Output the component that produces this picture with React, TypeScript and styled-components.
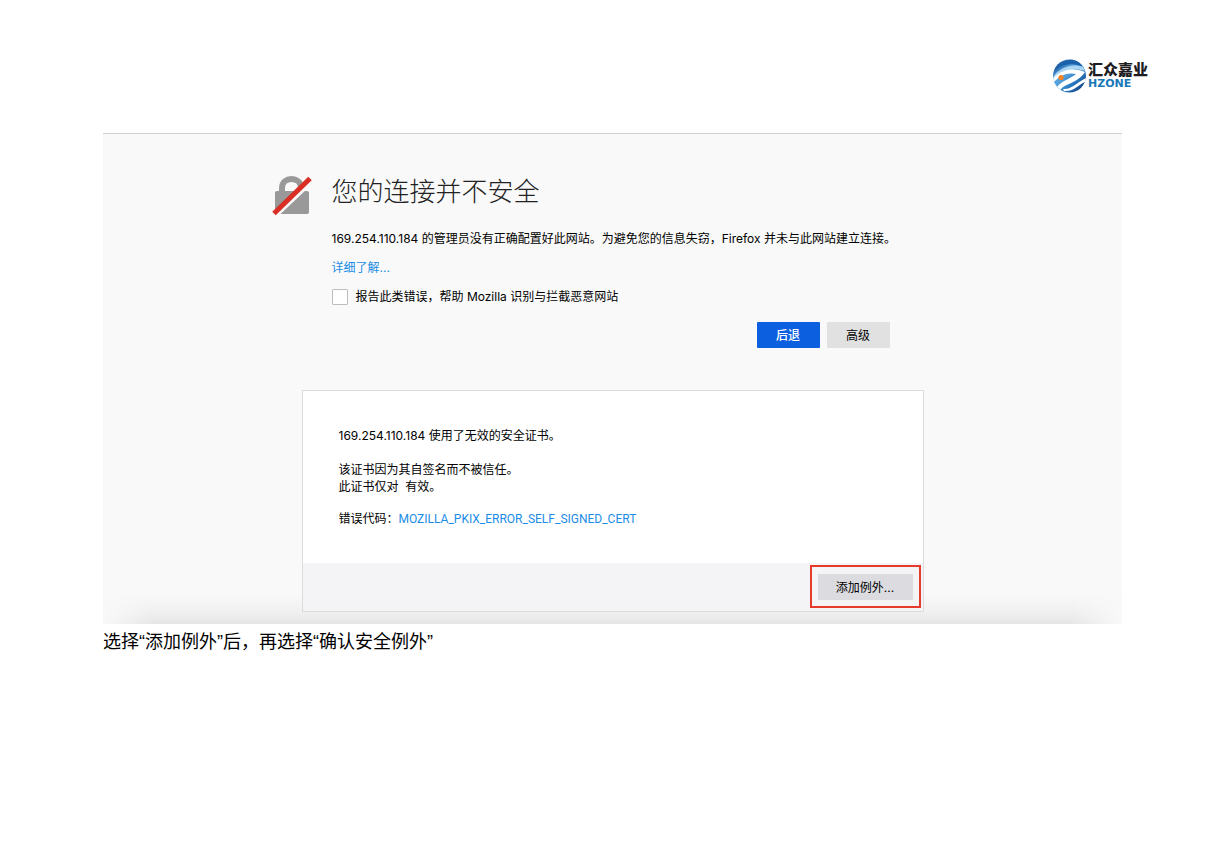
import React from "react";
import styled, { createGlobalStyle } from "styled-components";

const GlobalStyle = createGlobalStyle`
  * { box-sizing: border-box; }
  body {
    margin: 0;
    background: #fff;
    color: #000;
    font: 12px/17px Inter, "Noto Sans CJK SC", sans-serif;
  }
  h1, p { margin: 0; }
`;

const Page = styled.div`
  padding-bottom: 48px;
`;

const Header = styled.header`
  display: flex;
  justify-content: flex-end;
  height: 133px;
  padding: 58px 80px 0 0;
`;

const Brand = styled.div`
  display: flex;
  gap: 1px;
`;

const BrandText = styled.div`
  display: flex;
  flex-direction: column;
  padding-top: 2px;
`;

const BrandName = styled.span`
  font: 900 15px/18px "Noto Sans CJK SC", sans-serif;
  color: #1c1c22;
`;

const BrandLatin = styled.span`
  font: bold 11px/12px "DejaVu Sans", sans-serif;
  color: #1878b8;
`;

const Main = styled.main`
  padding: 0 106px 0 103px;
`;

const Screen = styled.section`
  border-top: 1px solid #cfcfcf;
  padding: 40px 20px 12px;
  background:
    linear-gradient(to right, #f9f9f9, rgba(249, 249, 249, 0) 50px, rgba(249, 249, 249, 0) calc(100% - 50px), #f9f9f9),
    linear-gradient(to top, #e6e6e6, #f0f0f0 12px, #f9f9f9 30px);
`;

const Column = styled.div`
  max-width: 682px;
  margin: 0 auto;
`;

const Warning = styled.div`
  display: flex;
  gap: 20px;
  margin-right: 30px;
`;

const WarningBody = styled.div`
  flex: 1;
`;

const Title = styled.h1`
  font: 200 26px/32px "Noto Sans CJK SC", sans-serif;
  color: #222;
  margin-bottom: 24px;
`;

const Paragraph = styled.p<{ $gap?: number }>`
  margin-bottom: ${(p) => p.$gap ?? 0}px;
  white-space: pre-wrap;
`;

const Link = styled.a`
  color: #1b8ce6;
  text-decoration: none;
`;

const ErrorLink = styled(Link)`
  font-family: Roboto, sans-serif;
`;

const CheckLabel = styled.label`
  display: flex;
  align-items: center;
  gap: 8px;
`;

const Checkbox = styled.input`
  appearance: none;
  width: 16px;
  height: 16px;
  margin: 0;
  border: 1px solid #bdbdbd;
  border-radius: 1px;
  background: #fff;
`;

const Actions = styled.div`
  display: flex;
  justify-content: flex-end;
  gap: 7px;
  margin: 17px 34px 0 0;
`;

const Button = styled.button<{ $primary?: boolean; $wide?: boolean }>`
  width: ${(p) => (p.$wide ? 95 : 63)}px;
  height: 26px;
  padding: 0;
  border: 0;
  border-radius: 1px;
  background: ${(p) => (p.$primary ? "#0c60df" : p.$wide ? "#dcdce0" : "#e1e1e1")};
  color: ${(p) => (p.$primary ? "#fff" : "#000")};
  font: inherit;
  font-weight: ${(p) => (p.$primary ? 500 : 400)};
`;

const Card = styled.section`
  margin: 42px 30px 0;
  border: 1px solid #dcdcdc;
  background: #fff;
`;

const CardBody = styled.div`
  padding: 36px 36px 35px;
`;

const CardFooter = styled.footer`
  display: flex;
  justify-content: flex-end;
  padding: 2px 2px 3px;
  background: #f4f4f6;
`;

const Highlight = styled.div`
  padding: 7px 6px 6px;
  border: 2px solid #e63a2a;
`;

const Caption = styled.p`
  font: 18px/26px "Liberation Sans", "Noto Sans CJK SC", sans-serif;
  padding-top: 5px;
`;

function Globe() {
  return (
    <svg width="35" height="36" viewBox="0 0 35 36" aria-hidden="true">
      <defs>
        <linearGradient id="sky" x1="0" y1="0" x2="1" y2="1">
          <stop offset="0" stopColor="#0b3f8c" />
          <stop offset=".4" stopColor="#5aa5de" />
          <stop offset=".65" stopColor="#2a7cc4" />
          <stop offset="1" stopColor="#0b2b66" />
        </linearGradient>
      </defs>
      <circle cx="17.5" cy="18" r="16.5" fill="url(#sky)" />
      <path d="M2 13C8 1 24-3 31 9C22 4 10 6 2 13Z" fill="#1c62ab" />
      <path d="M1 19C7 9 22 5 31 9L33 13C22 9 10 13 3 22Z" fill="#a9d4f2" />
      <path d="M1 21C8 12 20 9 33 14C30 19 24 23 17 26C12 28 9 30 9 32L5 29C9 23 18 21 24 16C16 14 8 17 2 24Z" fill="#fff" />
      <path d="M11 31C18 32 23 26 34 20L33 24C27 26 22 34 12 33Z" fill="#fff" />
      <circle cx="9" cy="19.500" r="2.600" fill="#f58220" />
    </svg>
  );
}

function BrokenLock() {
  return (
    <svg width="40" height="42" viewBox="0 0 40 42" aria-hidden="true">
      <path d="M10 20V14C10 2 29 2 29 14V20" fill="none" stroke="#999" strokeWidth="6" />
      <rect x="3" y="17" width="34" height="23" rx="2" fill="#999" />
      <path d="M3 41L40 6" stroke="#f9f9f9" strokeWidth="6" />
      <path d="M2 39.500L38 4.500" stroke="#d92d25" strokeWidth="5" />
    </svg>
  );
}

export default function App() {
  return (
    <Page lang="zh-CN">
      <GlobalStyle />
      <Header>
        <Brand>
          <Globe />
          <BrandText>
            <BrandName>汇众嘉业</BrandName>
            <BrandLatin>HZONE</BrandLatin>
          </BrandText>
        </Brand>
      </Header>
      <Main>
        <Screen>
          <Column>
            <Warning>
              <BrokenLock />
              <WarningBody>
                <Title>您的连接并不安全</Title>
                <Paragraph $gap={12}>
                  169.254.110.184 的管理员没有正确配置好此网站。为避免您的信息失窃，Firefox 并未与此网站建立连接。
                </Paragraph>
                <Paragraph $gap={12}>
                  <Link href="#more">详细了解...</Link>
                </Paragraph>
                <CheckLabel>
                  <Checkbox type="checkbox" />
                  报告此类错误，帮助 Mozilla 识别与拦截恶意网站
                </CheckLabel>
                <Actions>
                  <Button type="button" $primary>后退</Button>
                  <Button type="button">高级</Button>
                </Actions>
              </WarningBody>
            </Warning>
            <Card>
              <CardBody>
                <Paragraph $gap={17}>169.254.110.184 使用了无效的安全证书。</Paragraph>
                <Paragraph>该证书因为其自签名而不被信任。</Paragraph>
                <Paragraph $gap={15}>{"此证书仅对  有效。"}</Paragraph>
                <Paragraph>
                  错误代码：<ErrorLink href="#code">MOZILLA_PKIX_ERROR_SELF_SIGNED_CERT</ErrorLink>
                </Paragraph>
              </CardBody>
              <CardFooter>
                <Highlight>
                  <Button type="button" $wide>添加例外...</Button>
                </Highlight>
              </CardFooter>
            </Card>
          </Column>
        </Screen>
        <Caption>选择“添加例外”后，再选择“确认安全例外”</Caption>
      </Main>
    </Page>
  );
}
